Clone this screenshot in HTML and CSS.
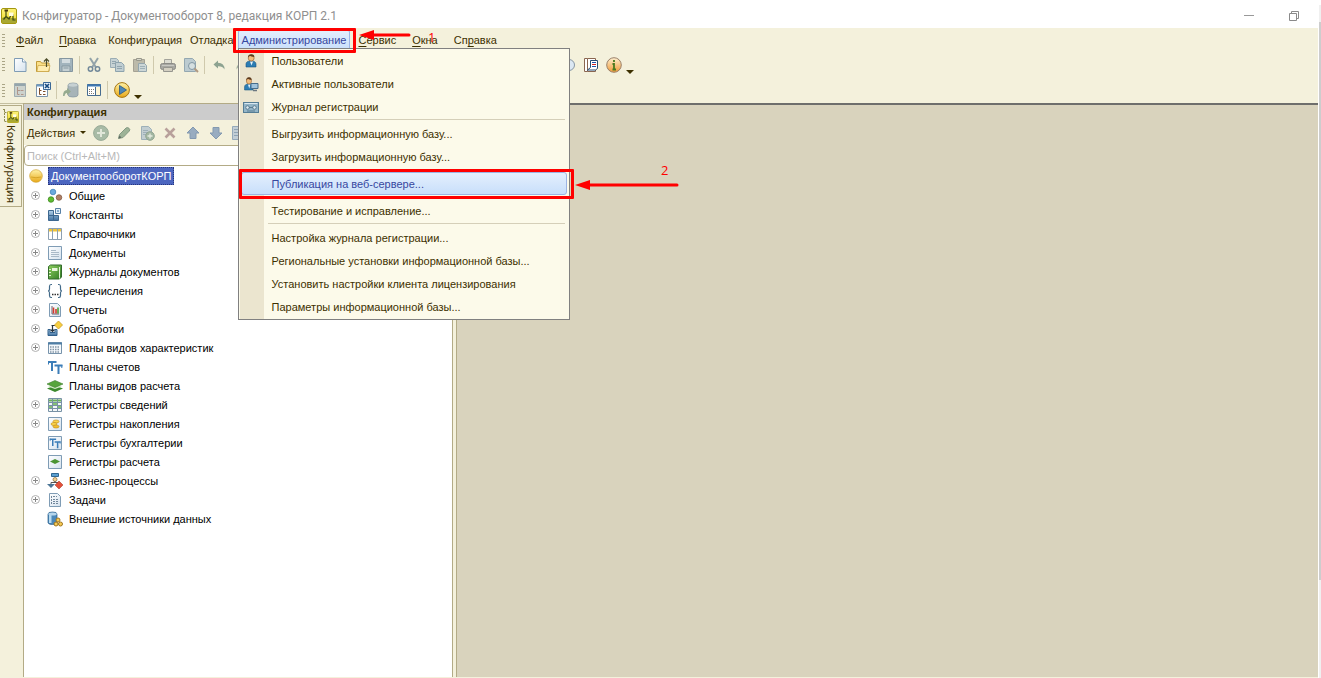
FILE: index.html
```html
<!DOCTYPE html>
<html lang="ru">
<head>
<meta charset="utf-8">
<title>Конфигуратор - Документооборот 8, редакция КОРП 2.1</title>
<link rel="stylesheet" href="styles.css">
</head>
<body>
<svg class="defs" aria-hidden="true">
  <defs>
    <linearGradient id="gold" x1="0" y1="0" x2="0" y2="1"><stop offset="0" stop-color="#fff3a8"/><stop offset="1" stop-color="#e8a818"/></linearGradient>
    <linearGradient id="lime" x1="0" y1="0" x2="0" y2="1"><stop offset="0" stop-color="#fdf37c"/><stop offset="1" stop-color="#f0d820"/></linearGradient>
    <linearGradient id="page" x1="0" y1="0" x2="1" y2="1"><stop offset="0" stop-color="#ffffff"/><stop offset="1" stop-color="#d5e2ee"/></linearGradient>
    <linearGradient id="steel" x1="0" y1="0" x2="0" y2="1"><stop offset="0" stop-color="#b4d2ea"/><stop offset="1" stop-color="#3f709f"/></linearGradient>
    <linearGradient id="leaf" x1="0" y1="0" x2="1" y2="1"><stop offset="0" stop-color="#8fd060"/><stop offset="1" stop-color="#2f7a24"/></linearGradient>
    <linearGradient id="amber" x1="0" y1="0" x2="0" y2="1"><stop offset="0" stop-color="#fff0d0"/><stop offset="1" stop-color="#f09a38"/></linearGradient>
    <symbol id="plus" viewBox="0 0 9 9"><circle cx="4.500" cy="4.500" r="4" fill="#fff" stroke="#b0b0b0"/><path d="M2 4.500h5M4.500 2v5" stroke="#888"/></symbol>
    <symbol id="sheet" viewBox="0 0 16 16"><path d="M1.500 1.500h13v13h-13z" fill="url(#page)" stroke="#7f9cb5"/></symbol>
    <symbol id="person" viewBox="0 0 16 16"><path d="M3 14V11q0-3 5-3t5 3v3z" fill="#2c7db4" stroke="#1b567f" stroke-width=".6"/><path d="M7 8.500l1.500 4 1.500-4z" fill="#e8f4fb"/><circle cx="8.200" cy="5" r="3" fill="#f2bc7c" stroke="#8a5420" stroke-width=".6"/><path d="M5 4.500q0-3.500 3.500-3.300Q11.500 1.500 11.300 4 8 3.500 6.800 2.800z" fill="#5c3a1c"/></symbol>
    <symbol id="tt" viewBox="0 0 16 16"><path d="M1 3h8.500M5 3v9M7.500 6.500h8M11.500 6.500V15" stroke="#3b7db8" stroke-width="2" fill="none"/><path d="M1.500 2v3.500M14.800 6v3" stroke="#3b7db8" fill="none"/></symbol>
    <symbol id="up" viewBox="0 0 16 16"><path d="M8 2l6 6h-3v5.500H5V8H2z" fill="#98acc0" stroke="#8399b0"/></symbol>
    <symbol id="cfg" viewBox="0 0 16 16"><rect x=".5" y=".5" width="15" height="15" rx="1.500" fill="url(#lime)" stroke="#a3970f"/><path d="M1 10l4.500-2 4 2H15v4.500q0 .5-.5.5h-13q-.5 0-.5-.5z" fill="#a9a832"/><path d="M5 2v6.500M2.500 11.500l2.500-3 3 2.500 2-4h2v5h2.500" fill="none" stroke="#3d4a12" stroke-width="1.200"/><path d="M8 4.500h4.500V8H8z" fill="#fffde0"/><path d="M3.500 1.500H7v2H3.500z" fill="#4a3a10"/></symbol>
  </defs>
</svg>

<div class="window">
  <div class="app">
    <header class="titlebar">
      <svg class="ico16" viewBox="0 0 16 16"><use href="#cfg"/></svg>
      <h1>Конфигуратор - Документооборот 8, редакция КОРП 2.1</h1>
      <button class="win-btn" aria-label="Свернуть"><svg width="12" height="12" viewBox="0 0 12 12"><path d="M1 5.500h10" stroke="#999"/></svg></button>
      <button class="win-btn" aria-label="Развернуть"><svg width="12" height="12" viewBox="0 0 12 12"><path d="M1.500 3.500h7v7h-7zM3.500 3.500v-2h7v7h-2" stroke="#8a8a8a" fill="none"/></svg></button>
    </header>

    <nav class="menubar">
      <span class="grip"></span>
      <button class="menu-item hot"><u>Ф</u>айл</button>
      <button class="menu-item hot"><u>П</u>равка</button>
      <button class="menu-item">Конфигурация</button>
      <button class="menu-item">Отладка</button>
      <div class="menu-host">
        <button class="menu-item open">Администрирование</button>
        <div class="dropdown">
          <button class="entry"><svg class="ico16" viewBox="0 0 16 16"><use href="#person"/></svg>Пользователи</button>
          <button class="entry"><svg class="ico16" viewBox="0 0 16 16"><g transform="translate(-1 0) scale(.85 1)"><use href="#person" width="16" height="16"/></g><path d="M8 7.500h7v5H8z" fill="#9fc3dc" stroke="#456d8b"/><path d="M10 14.500h4" stroke="#6b7780" stroke-width="1.500"/></svg>Активные пользователи</button>
          <button class="entry"><svg class="ico16" viewBox="0 0 16 16"><rect x=".5" y="3.500" width="15" height="10" fill="#94b5c8" stroke="#557d95"/><path d="M1.500 4.500h13" stroke="#d9e8f0"/><circle cx="4.500" cy="8.500" r="1.800" fill="#dce9f0" stroke="#5a7c90"/><circle cx="11.500" cy="8.500" r="1.800" fill="#dce9f0" stroke="#5a7c90"/><path d="M6 8.500h4M4 12h8" stroke="#5a7c90"/></svg>Журнал регистрации</button>
          <hr>
          <button class="entry">Выгрузить информационную базу...</button>
          <button class="entry">Загрузить информационную базу...</button>
          <hr>
          <button class="entry current">Публикация на веб-сервере...</button>
          <hr>
          <button class="entry">Тестирование и исправление...</button>
          <hr>
          <button class="entry">Настройка журнала регистрации...</button>
          <button class="entry">Региональные установки информационной базы...</button>
          <button class="entry">Установить настройки клиента лицензирования</button>
          <button class="entry">Параметры информационной базы...</button>
        </div>
      </div>
      <button class="menu-item hot"><u>С</u>ервис</button>
      <button class="menu-item hot"><u>О</u>кна</button>
      <button class="menu-item hot">Сп<u>р</u>авка</button>
    </nav>

    <div class="toolbar first">
      <span class="grip"></span>
      <button class="tool" aria-label="Создать"><svg class="ico16" viewBox="0 0 16 16"><path d="M2.500 1.500h8l3.500 3.500v9.500H2.500z" fill="url(#page)" stroke="#7f9cb5"/><path d="M10.500 1.500V5H14" fill="#fff" stroke="#7f9cb5"/></svg></button>
      <button class="tool" aria-label="Открыть"><svg class="ico16" viewBox="0 0 16 16"><path d="M1.500 14.500v-10h4l1 1.500h7.500v8.500z" fill="#fbdf86" stroke="#c09a38"/><path d="M2 14.500l1-6h12l-1.500 6z" fill="#ffedb0" stroke="#c9a445" stroke-width=".7"/><path d="M11.500 10V2M9 4.500L11.500 1.800 14 4.500" fill="none" stroke="#4b4b28" stroke-width="1.200"/></svg></button>
      <button class="tool" aria-label="Сохранить"><svg class="ico16" viewBox="0 0 16 16"><path d="M1.500 1.500h13v13h-13z" fill="#a2b4bd" stroke="#8496a0"/><path d="M4 2h8v4H4z" fill="#d3dcdf"/><path d="M4 9h8v5.500H4z" fill="#c5d0d3" stroke="#8799a1"/><path d="M5.500 11h5" stroke="#8799a1"/></svg></button>
      <span class="sep"></span>
      <button class="tool" aria-label="Вырезать"><svg class="ico16" viewBox="0 0 16 16"><path d="M4 1l6 9.500M12 1L6 10.500" stroke="#93a3a9" stroke-width="2"/><circle cx="4.500" cy="12" r="2.200" fill="none" stroke="#72899a" stroke-width="1.500"/><circle cx="11.500" cy="12" r="2.200" fill="none" stroke="#72899a" stroke-width="1.500"/></svg></button>
      <button class="tool" aria-label="Копировать"><svg class="ico16" viewBox="0 0 16 16"><path d="M1.500 1.500h6l2 2v7h-8z" fill="#c6d2d4" stroke="#9badb4"/><path d="M6.500 5.500h6l2.500 2.500v6.500H6.500z" fill="#c0ced2" stroke="#8da3ad"/><path d="M3 4.500h4M3 6.500h3M8 9.500h5M8 11.500h5" stroke="#91a5ae"/></svg></button>
      <button class="tool" aria-label="Вставить"><svg class="ico16" viewBox="0 0 16 16"><path d="M1.500 2.500h11v12h-11z" fill="#bcbaaa" stroke="#a5a294"/><path d="M4.500 1.500h5v2h-5z" fill="#d8d8ca" stroke="#98988d"/><path d="M6.500 6.500h6l2 2v6h-8z" fill="#cdd7d7" stroke="#94a6ad"/><path d="M8 9.500h5M8 11.500h5" stroke="#9eb0b7"/></svg></button>
      <span class="sep"></span>
      <button class="tool" aria-label="Печать"><svg class="ico16" viewBox="0 0 16 16"><path d="M4.500 2.500h7v4h-7z" fill="#dcdcd2" stroke="#a3a39b"/><rect x=".5" y="6.500" width="15" height="6" rx="2" fill="#a7a7a2" stroke="#8b8b86"/><path d="M3.500 10.500h9v4h-9z" fill="#d3cfc1" stroke="#96968f"/><path d="M2 8.500h12" stroke="#c8c8c2"/></svg></button>
      <button class="tool" aria-label="Просмотр"><svg class="ico16" viewBox="0 0 16 16"><path d="M1.500 1.500h8l3 3v10h-11z" fill="#bccbd0" stroke="#94a8b1"/><circle cx="9" cy="9" r="3.500" fill="#d5dfe0" stroke="#8297a3"/><path d="M11.500 11.500l3.500 3.500" stroke="#b09a82" stroke-width="2"/></svg></button>
      <span class="sep"></span>
      <button class="tool" aria-label="Отменить"><svg class="ico16" viewBox="0 0 16 16"><path d="M2.500 7.500l4.500-4v2.300q6.500 0 6.500 6.700-2-3.500-6.500-3.300v2.300z" fill="#8da391"/></svg></button>
      <button class="tool" aria-label="Вернуть"><svg class="ico16" viewBox="0 0 16 16"><path d="M13.500 7.500l-4.500-4v2.300q-6.500 0-6.500 6.700 2-3.500 6.500-3.300v2.300z" fill="#a2b29f"/></svg></button>
      <span class="tool-gap"></span>
      <button class="tool" aria-label="Поиск"><svg class="ico16" viewBox="0 0 16 16"><circle cx="9" cy="8" r="5.500" fill="#dce8f3" stroke="#8796a4"/></svg></button>
      <button class="tool" aria-label="Синтаксис-помощник"><svg class="ico16" viewBox="0 0 16 16"><path d="M1.500 1.500h3v13h-3zM4.500 1.500h8v13h-8" fill="#fff" stroke="#8a6650"/><path d="M7.500 3.500h7v8l-2 1.500h-8l3-2.500z" fill="#fff" stroke="#264b70"/><path d="M9 5.500h4" stroke="#1f55a8"/><path d="M9 7.500h4" stroke="#c22"/><path d="M9 9.500h4" stroke="#1f55a8"/></svg></button>
      <button class="tool" aria-label="О программе"><svg class="ico16" viewBox="0 0 16 16"><circle cx="8" cy="8" r="7.300" fill="url(#amber)" stroke="#9a8069"/><path d="M8 3v2M6.500 7H8v5M6.500 12.500h3.500" stroke="#4a7a1d" stroke-width="1.800" fill="none"/></svg></button>
      <button class="more" aria-label="Ещё"></button>
    </div>

    <div class="toolbar">
      <span class="grip"></span>
      <button class="tool" aria-label="Открыть конфигурацию"><svg class="ico16" viewBox="0 0 16 16"><path d="M2.500 1.500h11v13h-11z" fill="#ccd2cd" stroke="#a0adb0"/><path d="M3 3h10" stroke="#94a5ac" stroke-width="2"/><path d="M5.500 5v7.500h2M5.500 8.500h3M9 8.500h2.500M9 12.500h2.500" stroke="#b0968a" fill="none"/></svg></button>
      <button class="tool" aria-label="Закрыть конфигурацию"><svg class="ico16" viewBox="0 0 16 16"><path d="M1.500 2.500h11v12h-11z" fill="#fff" stroke="#7a94ab"/><path d="M2 3.500h7" stroke="#6d9ac2" stroke-width="2"/><path d="M4.500 6v6.500h2M4.500 8.500h2M8 9.500h2.500M8 12.500h2.500" stroke="#80502e" fill="none"/><path d="M8.500.5h7v7h-7z" fill="#e8f2fa" stroke="#3a6896"/><path d="M10 2l4 4M14 2l-4 4" stroke="#174a80" stroke-width="1.600"/></svg></button>
      <span class="sep"></span>
      <button class="tool" aria-label="Обновить базу"><svg class="ico16" viewBox="0 0 16 16"><path d="M5 3q0-2 5-2t5 2v10q0 2-5 2t-5-2z" fill="#a7b4b8" stroke="#8a9ba3" stroke-width=".8"/><ellipse cx="10" cy="3" rx="4.600" ry="1.700" fill="#c7d1d3"/><path d="M0 14q0-6 4-6V6l4 3.500L4 13v-2q-2 0-2.500 3z" fill="#95aa8f"/></svg></button>
      <button class="tool" aria-label="Окно конфигурации"><svg class="ico16" viewBox="0 0 16 16"><path d="M1.500 2.500h13v11h-13z" fill="#fff" stroke="#476c8f"/><path d="M1 3.500h14" stroke="#3f78b2" stroke-width="2"/><path d="M9.500 5v8.500" stroke="#476c8f"/><path d="M10 5h4v8h-4z" fill="#fff6d8"/><path d="M3 7.500h5M3 9.500h4M3 11.500h5" stroke="#80796e" stroke-dasharray="1 1"/></svg></button>
      <span class="sep"></span>
      <button class="tool" aria-label="Начать отладку"><svg class="ico16" viewBox="0 0 16 16"><circle cx="8" cy="8" r="7.400" fill="url(#gold)" stroke="#a67612"/><path d="M5.500 3.500l7 4.500-7 4.500z" fill="#4c86b6" stroke="#28587f" stroke-width=".8"/></svg></button>
      <button class="more" aria-label="Ещё"></button>
    </div>

    <div class="body">
      <aside class="rail">
        <button class="side-tab"><svg class="ico16" viewBox="0 0 16 16"><path d="M1.500 1v12M1.500 3.500h4M1.500 12.500h4M0 .5h3" stroke="#8f8c50" stroke-dasharray="2 1"/><g transform="translate(4 2)"><use href="#cfg" width="12" height="12"/></g></svg><span>Конфигурация</span></button>
      </aside>

      <section class="panel">
        <h2>Конфигурация</h2>
        <div class="actions">
          <button class="action-menu">Действия</button>
          <button class="tool" aria-label="Добавить"><svg class="ico16" viewBox="0 0 16 16"><circle cx="8" cy="8" r="7.400" fill="#a8bba6" stroke="#98aa97"/><path d="M8 4v8M4 8h8" stroke="#e1e7da" stroke-width="2"/></svg></button>
          <button class="tool" aria-label="Изменить"><svg class="ico16" viewBox="0 0 16 16"><path d="M2.500 13.500l1-4L10 3q1.500-1 3 .3t.3 2.700L7 12.500z" fill="#9db397" stroke="#839982"/><path d="M2.500 13.500l1-3 2 2z" fill="#606960"/></svg></button>
          <button class="tool" aria-label="Скопировать"><svg class="ico16" viewBox="0 0 16 16"><path d="M2.500 1.500h7l3 3v10h-10z" fill="#c2ced1" stroke="#9db0b8"/><path d="M4 5.500h5M4 7.500h6M4 9.500h3" stroke="#9db0b8"/><circle cx="11" cy="11" r="4.300" fill="#a2b7a2" stroke="#92a592"/><path d="M11 8.500v5M8.500 11h5" stroke="#e5ebdf" stroke-width="1.300"/></svg></button>
          <button class="tool" aria-label="Удалить"><svg class="ico16" viewBox="0 0 16 16"><path d="M3.500 3.500l9 9M12.500 3.500l-9 9" stroke="#b8a09b" stroke-width="2.600"/></svg></button>
          <button class="tool" aria-label="Вверх"><svg class="ico16" viewBox="0 0 16 16"><use href="#up"/></svg></button>
          <button class="tool" aria-label="Вниз"><svg class="ico16 flip" viewBox="0 0 16 16"><use href="#up"/></svg></button>
          <button class="tool" aria-label="Список"><svg class="ico16" viewBox="0 0 16 16"><path d="M1.500 1.500h13v13h-13z" fill="#c2ced6" stroke="#94a9ba"/><path d="M3 4.500h10M3 7.500h10M3 10.500h10" stroke="#8fa4b5"/></svg></button>
        </div>
        <input class="search" type="text" placeholder="Поиск (Ctrl+Alt+M)" aria-label="Поиск">
        <ul class="tree">
          <li class="root"><svg class="ico16" viewBox="0 0 16 16"><circle cx="8" cy="8" r="6.300" fill="url(#gold)" stroke="#d0a232" stroke-width=".7"/><path d="M3 9q5 1.500 10 0" stroke="#cf9d20" stroke-width=".8" fill="none"/></svg><span class="selected">ДокументооборотКОРП</span></li>
          <li><svg class="exp"><use href="#plus"/></svg><svg class="ico16" viewBox="0 0 16 16"><circle cx="6" cy="4" r="2.800" fill="#6aaade" stroke="#397bb3" stroke-width=".7"/><circle cx="4" cy="11.500" r="2.800" fill="#5fbd31" stroke="#347d17" stroke-width=".7"/><circle cx="12" cy="9.500" r="2.800" fill="#b08066" stroke="#7a513b" stroke-width=".7"/></svg>Общие</li>
          <li><svg class="exp"><use href="#plus"/></svg><svg class="ico16" viewBox="0 0 16 16"><path d="M1.500 3.500h5v5h-5zM1.500 8.500h5v5h-5zM6.500 8.500h5v5h-5z" fill="url(#steel)" stroke="#3c678f"/><path d="M8.500 1.500h5v5h-5z" fill="#e3eff8" stroke="#5780a6"/><path d="M10 3h2v2h-2z" fill="#86aed1"/></svg>Константы</li>
          <li><svg class="exp"><use href="#plus"/></svg><svg class="ico16" viewBox="0 0 16 16"><path d="M1.500 2.500h13v11h-13z" fill="#fff" stroke="#8da0b1"/><path d="M2 3h12v2.500H2z" fill="#eec43a"/><path d="M5.500 2.500v11M10.500 2.500v11" stroke="#8da0b1"/></svg>Справочники</li>
          <li><svg class="exp"><use href="#plus"/></svg><svg class="ico16" viewBox="0 0 16 16"><use href="#sheet"/><path d="M4 5.500h5M4 7.500h8M4 9.500h8M4 11.500h8" stroke="#a9b9c7"/></svg>Документы</li>
          <li><svg class="exp"><use href="#plus"/></svg><svg class="ico16" viewBox="0 0 16 16"><path d="M1.500 2.500l2-1.500h11v12l-2 2h-11z" fill="url(#leaf)" stroke="#336b2c"/><path d="M12.500 3v11.500" stroke="#e3f1d8"/><path d="M5 4h5.500v3H5z" fill="#eaf6de"/><path d="M2 5.500h2M2 8.500h2M2 11.500h2" stroke="#e4f3d8"/></svg>Журналы документов</li>
          <li><svg class="exp"><use href="#plus"/></svg><svg class="ico16" viewBox="0 0 16 16"><path d="M5 1.500H4q-1.500 0-1.500 2v2.500q0 2-1.500 2 1.500 0 1.500 2v2.500q0 2 1.500 2h1M11 1.500h1q1.500 0 1.500 2v2.500q0 2 1.500 2-1.500 0-1.500 2v2.500q0 2-1.500 2h-1" stroke="#426a89" fill="none" stroke-width="1.200"/><path d="M5 11.500h1.500M7.500 11.500H9M10 11.500h1.500" stroke="#333" stroke-width="1.500"/></svg>Перечисления</li>
          <li><svg class="exp"><use href="#plus"/></svg><svg class="ico16" viewBox="0 0 16 16"><path d="M2.500 1.500h8l3 3v10h-11z" fill="url(#page)" stroke="#7f9cb5"/><path d="M5 4v8h7" stroke="#667" fill="none"/><path d="M6.500 5.500v6M9 7v4.500" stroke="#d33a2c" stroke-width="1.600"/><path d="M11 5.500v6" stroke="#4a9e36" stroke-width="1.600"/></svg>Отчеты</li>
          <li><svg class="exp"><use href="#plus"/></svg><svg class="ico16" viewBox="0 0 16 16"><path d="M1 8.500h2v3h5v-3h2v6H1z" fill="url(#steel)" stroke="#31608c"/><path d="M4.500 4.500h4M5.500 4v6M3.500 8.500l2 2 2-2" stroke="#26323d" fill="none" stroke-width="1.200"/><path d="M11.500 0l4 4-4 4-4-4z" fill="#f7cf3f" stroke="#c99a24" stroke-width=".8"/></svg>Обработки</li>
          <li><svg class="exp"><use href="#plus"/></svg><svg class="ico16" viewBox="0 0 16 16"><path d="M1.500 2.500h13v11h-13z" fill="#f5f9fc" stroke="#7793ab"/><path d="M1 3.500h14" stroke="#4f7ea6" stroke-width="2"/><path d="M3 7h10M3 9.500h10M3 12h10" stroke="#8496a6" stroke-width="1.500" stroke-dasharray="1.500 1"/></svg>Планы видов характеристик</li>
          <li><i class="exp"></i><svg class="ico16" viewBox="0 0 16 16"><use href="#tt"/></svg>Планы счетов</li>
          <li><i class="exp"></i><svg class="ico16" viewBox="0 0 16 16"><path d="M0 10.500l8-3 8 3-8 3.500z" fill="#3c8a2c"/><path d="M1 8.500L8 6l7 2.500L8 11z" fill="#d5ecc6"/><path d="M0 6l8-3.500L16 6 8 9.500z" fill="#57a53c" stroke="#3c7c2c" stroke-width=".6"/></svg>Планы видов расчета</li>
          <li><svg class="exp"><use href="#plus"/></svg><svg class="ico16" viewBox="0 0 16 16"><path d="M1.500 1.500h13v13h-13z" fill="#f3f8f8" stroke="#7892a6"/><path d="M2 3.500h12" stroke="#6ab05a" stroke-width="2"/><path d="M1.500 5.500h13M1.500 8.500h13M1.500 11.500h13M5.500 2v12.500M10.500 2v12.500" stroke="#7892a6"/><path d="M6 7h4M2 10h3M11 10h3" stroke="#86c175" stroke-width="2"/></svg>Регистры сведений</li>
          <li><svg class="exp"><use href="#plus"/></svg><svg class="ico16" viewBox="0 0 16 16"><use href="#sheet"/><ellipse cx="9" cy="5.500" rx="3" ry="1.500" fill="#fbd44c" stroke="#c59424" stroke-width=".7"/><ellipse cx="7" cy="8" rx="3" ry="1.500" fill="#fbd44c" stroke="#c59424" stroke-width=".7"/><ellipse cx="9" cy="10.500" rx="3" ry="1.500" fill="#f3be2e" stroke="#c59424" stroke-width=".7"/></svg>Регистры накопления</li>
          <li><i class="exp"></i><svg class="ico16" viewBox="0 0 16 16"><use href="#sheet"/><g transform="translate(2 2) scale(.75)"><use href="#tt" width="16" height="16"/></g></svg>Регистры бухгалтерии</li>
          <li><i class="exp"></i><svg class="ico16" viewBox="0 0 16 16"><use href="#sheet"/><path d="M3 7.500L8 5l5 2.500L8 10z" fill="#4b9432"/></svg>Регистры расчета</li>
          <li><svg class="exp"><use href="#plus"/></svg><svg class="ico16" viewBox="0 0 16 16"><path d="M4.500.5h7v3h-7z" fill="#5b9fd0" stroke="#2f6792"/><circle cx="8" cy="6.500" r="2" fill="#f1cf91" stroke="#8a6a35" stroke-width=".7"/><path d="M4 11V9.500h8V11M8 8v2" stroke="#555" fill="none"/><path d="M0 11h8l-4 4z" fill="#4b7596"/><path d="M12 8l4 4-4 4-4-4z" fill="#e2503a" stroke="#a32c1c" stroke-width=".5"/></svg>Бизнес-процессы</li>
          <li><svg class="exp"><use href="#plus"/></svg><svg class="ico16" viewBox="0 0 16 16"><path d="M2.500 1.500h8l3 3v10h-11z" fill="url(#page)" stroke="#7f9cb5"/><path d="M4.500 4v9M6 4.500h4M6 7.500h6M6 9.500h6M6 11.500h6" stroke="#71869a" stroke-dasharray="2 1"/></svg>Задачи</li>
          <li><i class="exp"></i><svg class="ico16" viewBox="0 0 16 16"><path d="M1 3q0-2 4.500-2T10 3v8.500q0 2-4.500 2t-4.500-2z" fill="#4c88b8" stroke="#2c5f8a" stroke-width=".7"/><path d="M2 4h2.500v8H2z" fill="#b8dbf0"/><ellipse cx="5.500" cy="3" rx="4.200" ry="1.500" fill="#b6d6ec"/><circle cx="11" cy="9" r="2" fill="#f6cb55" stroke="#a0761f"/><circle cx="9" cy="13" r="2" fill="#f6cb55" stroke="#a0761f"/><circle cx="13.500" cy="13" r="2" fill="#f6cb55" stroke="#a0761f"/></svg>Внешние источники данных</li>
        </ul>
      </section>
      <div class="splitter"></div>
      <main class="workspace"></main>
    </div>
  </div>
  <div class="outer-scroll"><div class="thumb"></div></div>
</div>

<div class="mark mark-menu"></div>
<svg class="mark-arrow arrow-one" viewBox="0 0 54 12"><path d="M15 6h36" stroke="#f00" stroke-width="3" stroke-linecap="round"/><path d="M1 6l15-5v10z" fill="#f00"/></svg>
<span class="mark-num num-one">1</span>
<div class="mark mark-entry"></div>
<svg class="mark-arrow arrow-two" viewBox="0 0 104 12"><path d="M14 6h88" stroke="#f00" stroke-width="3" stroke-linecap="round"/><path d="M0 6l15-5v10z" fill="#f00"/></svg>
<span class="mark-num num-two">2</span>
</body>
</html>
```
FILE: styles.css
```css
* { box-sizing: border-box; }

body {
  margin: 0;
  position: relative;
  background: #fff;
  color: #3d3000;
  font: 11px/14px "Liberation Sans", Arial, sans-serif;
  overflow: hidden;
}

button {
  padding: 0;
  border: 0;
  background: none;
  color: inherit;
  font: inherit;
  white-space: nowrap;
}

svg { display: block; flex: none; }
.defs { position: absolute; width: 0; height: 0; }
.ico16 { width: 16px; height: 16px; }
.flip { transform: rotate(180deg); }

.window { display: flex; height: 100vh; }
.app { flex: 1; min-width: 0; display: flex; flex-direction: column; padding-bottom: 1px; background: #f4f1dc; }

/* Title bar */
.titlebar {
  display: flex;
  align-items: center;
  height: 28px;
  padding: 4px 16px 0 1px;
  background: #fff;
}
.titlebar h1 {
  flex: 1;
  margin: 0 0 0 5px;
  color: #8f8f8f;
  font: 12px/16px Roboto, sans-serif;
}
.win-btn { width: 16px; margin-left: 29px; display: flex; justify-content: center; }

/* Menu bar */
.menubar { display: flex; align-items: center; height: 24px; }
.grip {
  width: 3px;
  height: 13px;
  margin: 0 3px 0 2px;
  background: repeating-linear-gradient(#aaa586 0 1px, transparent 1px 3px);
}
.menu-item { height: 20px; padding: 0 3px; border: 1px solid transparent; border-radius: 2px; }
.menu-item.hot { padding: 0 7px; }
.menu-item u { text-underline-offset: 2px; }
.menu-item.open {
  color: #37479f;
  border-color: #9db4e4;
  background: linear-gradient(#e3eefc, #c9dffb);
}
.menu-host { position: relative; }

.dropdown {
  position: absolute;
  z-index: 5;
  top: 18px;
  left: 0;
  width: 332px;
  padding: 0 2px 1px;
  border: 1px solid #808080;
  background: linear-gradient(to right, #fcfaea 1px, #ebe5cf 1px 25px, #fcfaea 25px);
}
.entry {
  position: relative;
  display: flex;
  align-items: center;
  width: 100%;
  height: 23px;
  padding-left: 31px;
}
.entry .ico16 { margin: 0 13px 0 -29px; }
.entry.current {
  color: #37479f;
  border: 1px solid #9db4e4;
  border-radius: 3px;
  padding-left: 30px;
  background: linear-gradient(#e4effd, #c8dffb);
}
.dropdown hr { height: 1px; margin: 1px 2px 2px 27px; border: 0; background: #d5cfb9; }

/* Toolbars */
.toolbar { display: flex; align-items: center; height: 26px; padding-right: 8px; }
.toolbar.first { height: 25px; }
.tool { width: 23px; height: 22px; display: flex; align-items: center; justify-content: center; flex: none; }
.sep { width: 5px; height: 18px; background: linear-gradient(to right, transparent 2px, #cfc9ac 2px 3px, transparent 3px); }
.tool-gap { width: 303px; }
.more { width: 10px; padding-top: 14px; display: flex; justify-content: center; }
.more::before,
.action-menu::after { content: ""; border: 4px solid transparent; border-top-color: #3d3000; border-bottom: 0; }

/* Body */
.body { flex: 1; min-height: 0; display: flex; }
.rail { width: 23px; padding-top: 1px; border-top: 1px solid #c4bfa0; }
.side-tab {
  width: 22px;
  padding: 3px 0;
  display: flex;
  flex-direction: column;
  align-items: center;
  border: 1px solid #b3ab86;
  border-left: 0;
}
.side-tab span { writing-mode: vertical-rl; font: 11px/14px "Noto Sans", sans-serif; }

.panel { width: 430px; display: flex; flex-direction: column; border: 1px solid #b3ab86; border-width: 1px 1px 0; background: #fff; }
.panel h2 { margin: 0; height: 16px; padding-left: 3px; background: #ccc; font: bold 11px/16px "Liberation Sans", Arial, sans-serif; }
.actions { display: flex; align-items: center; height: 25px; background: #f4f1dc; }
.action-menu { display: flex; align-items: center; gap: 5px; padding: 0 3px; }
.action-menu::after { border-width: 3px 3px 0; }
.search {
  height: 21px;
  padding: 0 2px;
  border: 1px solid #b3ab86;
  border-radius: 4px;
  background: #fff;
  font: inherit;
}
.search::placeholder { color: #b8b8b8; opacity: 1; }

.tree { margin: 0; padding: 0; list-style: none; color: #000; }
.tree li { display: flex; align-items: center; height: 19px; padding-left: 7px; }
.tree .root { padding-left: 4px; height: 20px; }
.tree .ico16 { margin-right: 6px; }
.tree .root .ico16 { margin-right: 4px; }
.exp { width: 9px; height: 9px; margin-right: 7px; flex: none; }
.selected { padding: 2px 3px; color: #fff; background: #4c66c0; outline: 1px dotted #27357c; outline-offset: -1px; }

.splitter { width: 4px; border-top: 1px solid #7e7e75; border-right: 1px solid #b3ab86; }
.workspace { flex: 1; border-top: 2px solid #6e6e6c; background: #d9d3bd; }

.outer-scroll { width: 3px; margin-top: 5px; padding-top: 17px; border-left: 1px solid #fff; background: #f0f0f0; }
.thumb { height: 85%; background: #cdcdcd; }

/* Callouts laid over the window */
.mark { position: absolute; z-index: 10; border: 3px solid #f00; border-radius: 1px; }
.mark-menu { left: 233px; top: 28px; width: 123px; height: 25px; }
.mark-entry { left: 239px; top: 169px; width: 335px; height: 30px; }
.mark-arrow { position: absolute; z-index: 10; height: 12px; }
.arrow-one { left: 358px; top: 29px; width: 54px; }
.arrow-two { left: 575px; top: 179px; width: 104px; }
.mark-num { position: absolute; z-index: 10; color: #f00; font: 13px/16px "Open Sans", sans-serif; }
.num-one { left: 428px; top: 29px; }
.num-two { left: 661px; top: 162px; }
```
